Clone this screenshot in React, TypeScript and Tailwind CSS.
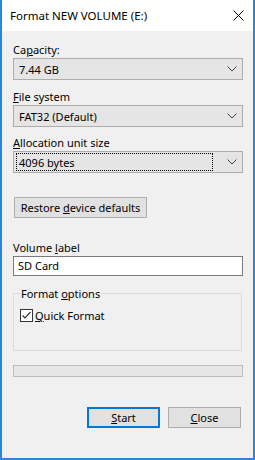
import { ReactNode } from "react";

const font = { fontFamily: '"Noto Sans", "Liberation Sans", sans-serif' };

const Chevron = () => (
  <svg width="10" height="6" viewBox="0 0 10 6" className="shrink-0">
    <path d="M0.5 0.5 L5 5 L9.5 0.5" fill="none" stroke="#404040" strokeWidth="1" />
  </svg>
);

const Label = ({ children }: { children: ReactNode }) => (
  <div className="h-[15px] leading-[15px] text-[11px] text-black">{children}</div>
);

const Combo = ({ value, focused }: { value: string; focused?: boolean }) => (
  <div className="mt-[1px] h-[22px] w-[230px] flex items-center border border-[#adadad] bg-[#e5e5e5] pr-[5px]">
    <div
      className={`flex-1 h-[18px] ml-[2px] mr-[14px] flex items-center pl-[2px] text-[11px] leading-[15px] text-black ${
        focused ? "border border-dotted border-black" : "border border-transparent"
      }`}
    >
      {value}
    </div>
    <Chevron />
  </div>
);

export default function App() {
  return (
    <div style={font} className="w-[255px] h-[460px] bg-[#f0f0f0] border-x-2 border-b-2 border-[#2b87d6] flex flex-col">
      {/* title bar */}
      <div className="h-[31px] bg-white flex items-center pl-[8px] pr-[9px] shrink-0">
        <span className="text-[11.5px] text-black flex-1">Format NEW VOLUME (E:)</span>
        <svg width="11" height="11" viewBox="0 0 11 11">
          <path d="M0.5 0.5 L10.5 10.5 M10.5 0.5 L0.5 10.5" stroke="#000" strokeWidth="1" />
        </svg>
      </div>

      <div className="flex flex-col pl-[11px] pt-[11px]">
        <Label>
          Ca<u>p</u>acity:
        </Label>
        <Combo value="7.44 GB" />

        <div className="mt-[9px]">
          <Label>
            <u>F</u>ile system
          </Label>
        </div>
        <Combo value="FAT32 (Default)" />

        <div className="mt-[8px]">
          <Label>
            <u>A</u>llocation unit size
          </Label>
        </div>
        <Combo value="4096 bytes" focused />

        <button className="mt-[24px] ml-[1px] w-[133px] h-[21px] border border-[#adadad] bg-[#e1e1e1] text-[11px] leading-[15px] text-black">
          Restore <u>d</u>evice defaults
        </button>

        <div className="mt-[22px]">
          <Label>
            Volume <u>l</u>abel
          </Label>
        </div>
        <div className="mt-[1px] w-[230px] h-[20px] bg-white border border-[#7a7a7a] flex items-center pl-[4px] text-[11px] text-black">
          SD Card
        </div>

        {/* group box */}
        <div className="relative mt-[17px] w-[229px] h-[58px] border border-[#dcdcdc]">
          <span className="absolute left-[6px] -top-[8px] px-[1px] bg-[#f0f0f0] text-[11px] leading-[15px] text-black">
            Format <u>o</u>ptions
          </span>
          <div className="mt-[14px] ml-[6px] flex items-center gap-[2px]">
            <div className="w-[13px] h-[13px] border border-[#333333] bg-white flex items-center justify-center">
              <svg width="11" height="11" viewBox="0 0 11 11">
                <path d="M1.5 5.5 L4 8 L9.5 2" fill="none" stroke="#333333" strokeWidth="1.2" />
              </svg>
            </div>
            <span className="text-[11px] leading-[15px] text-black">
              <u>Q</u>uick Format
            </span>
          </div>
        </div>

        {/* progress */}
        <div className="mt-[14px] w-[230px] h-[12px] bg-[#e6e6e6] border border-[#bcbcbc]" />

        <div className="mt-[30px] flex gap-[8px] pl-[74px]">
          <button className="w-[73px] h-[21px] border-2 border-[#0078d7] bg-[#e1e1e1] text-[11px] leading-[15px] text-black">
            <u>S</u>tart
          </button>
          <button className="w-[73px] h-[21px] border border-[#adadad] bg-[#e1e1e1] text-[11px] leading-[15px] text-black">
            <u>C</u>lose
          </button>
        </div>
      </div>
    </div>
  );
}
